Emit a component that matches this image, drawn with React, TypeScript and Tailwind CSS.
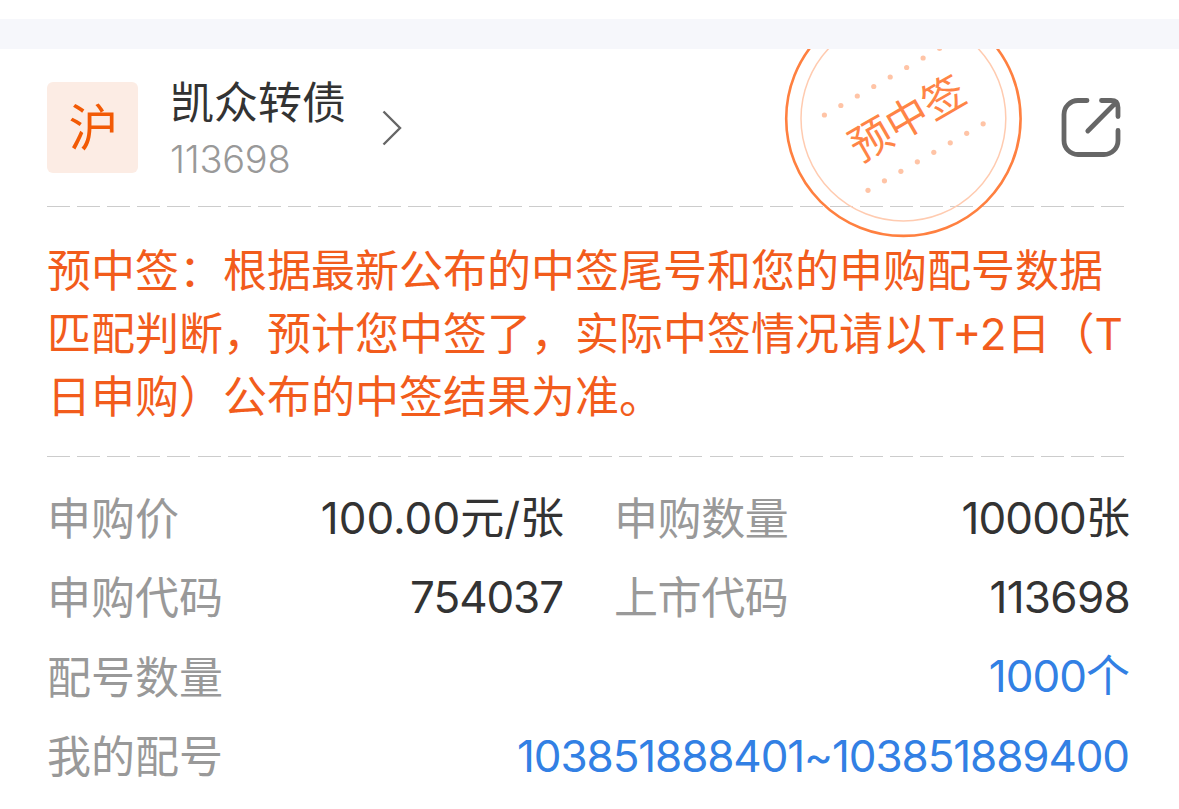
import React from 'react';

interface FieldProps {
    label: string;
    value: string;
    labelClass?: string;
    valueClass: string;
}

const Field: React.FC<FieldProps> = ({ label, value, labelClass = '', valueClass }) => {
    return (
        <div className="flex items-center justify-between h-[79.300px] text-[44px] leading-none whitespace-nowrap">
            <span className={`text-[#999999] ${labelClass}`}>{label}</span>
            <span className={`pb-[2px] ${valueClass}`}>{value}</span>
        </div>
    );
};

const DashedLine: React.FC = () => {
    return (
        <svg className="block w-[1077px] h-px" viewBox="0 0 1077 1" shapeRendering="crispEdges">
            <line x1="0" y1="0.5" x2="1077" y2="0.5" stroke="#cccccc" strokeDasharray="23 7.114" />
        </svg>
    );
};

const DOTS = [0, 1, 2, 3, 4, 5, 6, 7];

const Stamp: React.FC = () => {
    return (
        <svg className="absolute left-[783px] top-0 w-[240px] h-[192px]" viewBox="783 49 240 192" fill="none">
            <circle cx="903.4" cy="118.7" r="117.2" stroke="#ff8040" strokeWidth="2.6" />
            <circle cx="903.4" cy="118.5" r="102.4" stroke="#ffcbb0" strokeWidth="1.5" />
            {DOTS.map((i) => (
                <g key={i} fill="#ffc4a6">
                    <circle cx={824.4 + i * 16.45} cy={115 - i * 9.5} r="2.6" />
                    <circle cx={868 + i * 16.45} cy={190.3 - i * 9.5} r="2.6" />
                </g>
            ))}
            <text
                x="907"
                y="118"
                transform="rotate(-30 907 118)"
                textAnchor="middle"
                dominantBaseline="central"
                fill="#ff8446"
                fontSize="42"
            >
                预中签
            </text>
        </svg>
    );
};

export default function App() {
    return (
        <div className="w-[1179px] h-[809px] overflow-hidden bg-white font-['Inter','Noto_Sans_CJK_SC',sans-serif] font-normal">
            <div className="mt-[19px] h-[30px] bg-[#f6f7fb]" />

            <div className="relative pl-[47px] pr-[48px]">
                <div className="flex items-start h-[157px] pt-[33px]">
                    <div className="flex items-center justify-center w-[91px] h-[91px] pl-[2px] rounded-md bg-[#fcece4] text-[50px] leading-none text-[#f25a05]">
                        沪
                    </div>
                    <div className="ml-[32px] -mt-px w-[177px] whitespace-nowrap">
                        <div className="h-[44px] text-[44px] leading-[44px] text-[#333333]">凯众转债</div>
                        <div className="mt-[14px] text-[38px] leading-[40px] font-light tracking-[-0.25px] text-[#999999]">
                            113698
                        </div>
                    </div>
                    <svg className="ml-[34px] mt-[27px] w-[22px] h-[38px]" viewBox="0 0 22 38" fill="none">
                        <path d="M2.500 2.500 19 19 2.500 35.500" stroke="#666666" strokeWidth="2.4" />
                    </svg>
                    <svg
                        className="ml-auto mr-[8px] mt-[14px] w-[64px] h-[64px]"
                        viewBox="1059 96 64 64"
                        fill="none"
                        stroke="#666666"
                        strokeWidth="4.800"
                        strokeLinecap="round"
                    >
                        <path d="M1087 100.5H1078a14 14 0 0 0-14 14v26a14 14 0 0 0 14 14h26a14 14 0 0 0 14-14v-10" />
                        <path d="M1101.500 100.5h9.500c5 0 7 2.500 7 7v9M1087.800 131 1115 103.500" />
                    </svg>
                </div>

                <DashedLine />

                <div className="pt-[33px] h-[249px] text-[44px] leading-[63px] whitespace-nowrap text-[#f25c1c]">
                    <p>预中签：根据最新公布的中签尾号和您的申购配号数据</p>
                    <p>匹配判断，预计您中签了，实际中签情况请以T+2日（T</p>
                    <p>日申购）公布的中签结果为准。</p>
                </div>

                <DashedLine />

                <div className="pt-[22px]">
                    <div className="grid grid-cols-[517px_517px] gap-x-[50px]">
                        <Field label="申购价" value="100.00元/张" valueClass="text-[#333333]" />
                        <Field
                            label="申购数量"
                            value="10000张"
                            labelClass="tracking-[-0.4px]"
                            valueClass="mr-[2px] tracking-[-0.9px] text-[#333333]"
                        />
                        <Field label="申购代码" value="754037" valueClass="mr-[1px] tracking-[-1.1px] text-[#333333]" />
                        <Field
                            label="上市代码"
                            value="113698"
                            labelClass="tracking-[-0.4px]"
                            valueClass="mr-[1px] tracking-[-0.7px] text-[#333333]"
                        />
                    </div>
                    <Field
                        label="配号数量"
                        value="1000个"
                        labelClass="pt-[2px]"
                        valueClass="mr-[2px] tracking-[-1px] text-[#3280e4]"
                    />
                    <Field
                        label="我的配号"
                        value="103851888401~103851889400"
                        valueClass="mr-[2px] tracking-[-1.120px] text-[#3280e4]"
                    />
                </div>

                <Stamp />
            </div>
        </div>
    );
}
